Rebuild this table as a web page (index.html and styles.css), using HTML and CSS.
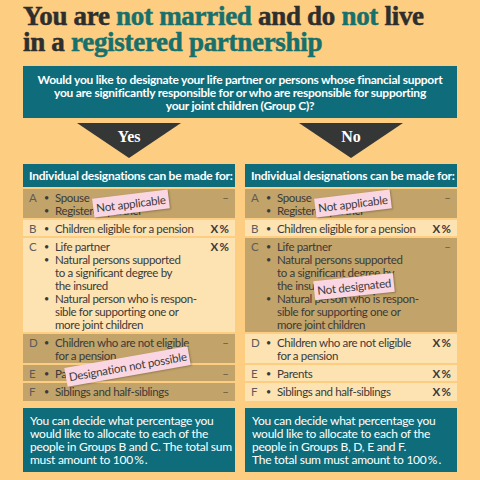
FILE: index.html
```html
<!DOCTYPE html>
<html lang="en">
<head>
    <meta charset="UTF-8">
    <title>Designation of beneficiaries</title>
    <link rel="stylesheet" href="styles.css">
</head>
<body>
    <div class="page">
        <h1 class="title">You are <em>not married</em> and do <em>not</em> live<br>in a <em>registered partnership</em></h1>

        <div class="question">
            Would you like to designate your life partner or persons whose financial support<br>
            you are significantly responsible for or who are responsible for supporting<br>
            your joint children (Group C)?
        </div>

        <div class="choices">
            <!-- Yes branch -->
            <div class="branch">
                <div class="arrow"><span>Yes</span></div>
                <div class="panel">
                    <div class="panel-head">Individual designations can be made for:</div>
                    <div class="row dark">
                        <span class="grp">A</span>
                        <ul><li>Spouse</li><li>Registered partner</li></ul>
                        <span class="val">–</span>
                    </div>
                    <div class="row light">
                        <span class="grp">B</span>
                        <ul><li>Children eligible for a pension</li></ul>
                        <span class="val">X&#8201;%</span>
                    </div>
                    <div class="row light">
                        <span class="grp">C</span>
                        <ul>
                            <li>Life partner</li>
                            <li>Natural persons supported<br>to a significant degree by<br>the insured</li>
                            <li>Natural person who is respon-<br>sible for supporting one or<br>more joint children</li>
                        </ul>
                        <span class="val">X&#8201;%</span>
                    </div>
                    <div class="row dark">
                        <span class="grp">D</span>
                        <ul><li>Children who are not eligible<br>for a pension</li></ul>
                        <span class="val">–</span>
                    </div>
                    <div class="row dark">
                        <span class="grp">E</span>
                        <ul><li>Parents</li></ul>
                        <span class="val">–</span>
                    </div>
                    <div class="row dark">
                        <span class="grp">F</span>
                        <ul><li>Siblings and half-siblings</li></ul>
                        <span class="val">–</span>
                    </div>

                    <span class="sticker s-applicable">Not applicable</span>
                    <span class="sticker s-possible">Designation not possible</span>
                </div>
                <div class="note">
                    You can decide what percentage you<br>would like to allocate to each of the<br>people in Groups B and C. The total sum<br>must amount to 100&#8201;%&#8201;.
                </div>
            </div>

            <!-- No branch -->
            <div class="branch">
                <div class="arrow"><span>No</span></div>
                <div class="panel">
                    <div class="panel-head">Individual designations can be made for:</div>
                    <div class="row dark">
                        <span class="grp">A</span>
                        <ul><li>Spouse</li><li>Registered partner</li></ul>
                        <span class="val">–</span>
                    </div>
                    <div class="row light">
                        <span class="grp">B</span>
                        <ul><li>Children eligible for a pension</li></ul>
                        <span class="val">X&#8201;%</span>
                    </div>
                    <div class="row dark">
                        <span class="grp">C</span>
                        <ul>
                            <li>Life partner</li>
                            <li>Natural persons supported<br>to a significant degree by<br>the insured</li>
                            <li>Natural person who is respon-<br>sible for supporting one or<br>more joint children</li>
                        </ul>
                        <span class="val">–</span>
                    </div>
                    <div class="row light">
                        <span class="grp">D</span>
                        <ul><li>Children who are not eligible<br>for a pension</li></ul>
                        <span class="val">X&#8201;%</span>
                    </div>
                    <div class="row light">
                        <span class="grp">E</span>
                        <ul><li>Parents</li></ul>
                        <span class="val">X&#8201;%</span>
                    </div>
                    <div class="row light">
                        <span class="grp">F</span>
                        <ul><li>Siblings and half-siblings</li></ul>
                        <span class="val">X&#8201;%</span>
                    </div>

                    <span class="sticker s-applicable">Not applicable</span>
                    <span class="sticker s-designated">Not designated</span>
                </div>
                <div class="note">
                    You can decide what percentage you<br>would like to allocate to each of the<br>people in Groups B, D, E and F.<br>The total sum must amount to 100&#8201;%&#8201;.
                </div>
            </div>
        </div>
    </div>
</body>
</html>
```

FILE: styles.css
```css
:root {
    --bg: #fdcd81;
    --teal: #0f6d7b;
    --title-teal: #17706b;
    --ink: #2e2e2e;
    --row-dark: #c2a369;
    --row-light: #fde2b2;
    --text: #3a3a3a;
    --sticker: #f9d6e2;
}

body {
    margin: 0;
    background: var(--bg);
    font-family: 'Lato', sans-serif;
    color: var(--text);
}

.page {
    padding: 0 23px;
}

.title {
    margin: 0;
    padding-top: 3px;
    font-family: 'Liberation Serif', serif;
    font-weight: bold;
    font-size: 27px;
    line-height: 26px;
    color: var(--ink);
    letter-spacing: -0.3px;
    -webkit-text-stroke: 0.5px currentColor;
}

.title em {
    font-style: normal;
    color: var(--title-teal);
}

.question {
    margin-top: 11px;
    background: var(--teal);
    color: #fff;
    font-weight: bold;
    font-size: 12px;
    line-height: 13px;
    letter-spacing: -0.25px;
    text-align: center;
    white-space: nowrap;
    overflow: hidden;
    padding: 7px 10px 6px;
}

.choices {
    display: grid;
    grid-template-columns: minmax(0, 1fr) minmax(0, 1fr);
    gap: 10px;
}

.arrow {
    width: 104px;
    height: 35px;
    margin: 5px auto 6px;
    background: #353636;
    clip-path: polygon(0 0, 100% 0, 50% 100%);
    text-align: center;
}

.arrow span {
    display: block;
    padding-top: 5px;
    font-family: 'Liberation Serif', serif;
    font-weight: bold;
    font-size: 16px;
    color: #fff;
}

.panel {
    position: relative;
    display: flex;
    flex-direction: column;
    gap: 2px;
}

.panel-head {
    background: var(--teal);
    color: #fff;
    font-weight: bold;
    font-size: 12px;
    line-height: 23px;
    letter-spacing: -0.25px;
    white-space: nowrap;
    overflow: hidden;
    padding-left: 6px;
}

.row {
    display: flex;
    padding: 2px 6px 1px;
    font-size: 11.5px;
    line-height: 13px;
    letter-spacing: -0.35px;
    white-space: nowrap;
}

.row:last-of-type {
    padding-bottom: 3px;
}

.row.dark {
    background: var(--row-dark);
}

.row.light {
    background: var(--row-light);
}

.grp {
    width: 15px;
    color: #5c5c5c;
}

.row ul {
    flex: 1;
    margin: 0;
    padding: 0;
    list-style: none;
}

.row li {
    position: relative;
    padding-left: 11px;
}

.row li::before {
    content: "•";
    position: absolute;
    left: 0;
    font-size: 9px;
}

.val {
    color: var(--text);
    font-weight: bold;
    letter-spacing: 0;
}

.row.dark .val {
    font-weight: normal;
    color: #6a5a3c;
}

.note {
    margin-top: 7px;
    background: var(--teal);
    color: #fff;
    font-size: 12px;
    line-height: 13px;
    letter-spacing: -0.25px;
    white-space: nowrap;
    overflow: hidden;
    padding: 6px 7px;
}

.sticker {
    position: absolute;
    background: var(--sticker);
    color: #3b3b3b;
    font-size: 11.5px;
    line-height: 17px;
    letter-spacing: -0.2px;
    padding: 1px 3px;
    box-shadow: 1px 1px 2px rgba(0, 0, 0, 0.25);
    white-space: nowrap;
}

.s-applicable {
    left: 70px;
    top: 30px;
    transform: rotate(-7deg);
}

.s-designated {
    left: 69px;
    top: 113px;
    transform: rotate(-6deg);
}

.s-possible {
    left: 42px;
    top: 193px;
    transform: rotate(-10deg);
}
```
